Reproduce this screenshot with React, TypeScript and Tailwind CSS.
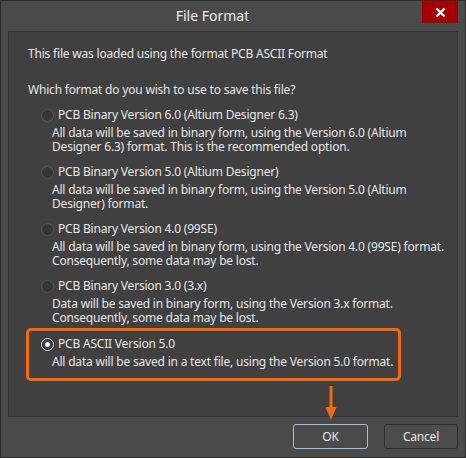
import React from "react";

type Opt = { label: string; desc: string[] };

const options: Opt[] = [
  {
    label: "PCB Binary Version 6.0 (Altium Designer 6.3)",
    desc: [
      "All data will be saved in binary form, using the Version 6.0 (Altium",
      "Designer 6.3) format. This is the recommended option.",
    ],
  },
  {
    label: "PCB Binary Version 5.0 (Altium Designer)",
    desc: [
      "All data will be saved in binary form, using the Version 5.0 (Altium",
      "Designer) format.",
    ],
  },
  {
    label: "PCB Binary Version 4.0 (99SE)",
    desc: [
      "All data will be saved in binary form, using the Version 4.0 (99SE) format.",
      "Consequently, some data may be lost.",
    ],
  },
  {
    label: "PCB Binary Version 3.0 (3.x)",
    desc: [
      "Data will be saved in binary form, using the Version 3.x format.",
      "Consequently, some data may be lost.",
    ],
  },
];

function Radio({ checked }: { checked?: boolean }) {
  if (checked) {
    return (
      <span className="flex h-[13px] w-[13px] shrink-0 items-center justify-center rounded-full border border-[#c9d6e3] bg-[#3a3a3a]">
        <span className="h-[5px] w-[5px] rounded-full bg-[#f2f2f2]" />
      </span>
    );
  }
  return <span className="block h-[13px] w-[13px] shrink-0 rounded-full border border-[#555] bg-[#363636]" />;
}

function Option({ opt, checked }: { opt: Opt; checked?: boolean }) {
  return (
    <div className="whitespace-nowrap">
      <div className="flex h-[14px] items-center">
        <Radio checked={checked} />
        <span className="ml-[4px]">{opt.label}</span>
      </div>
      <div className="mt-[4px] pl-[11px]">
        {opt.desc.map((d) => (
          <div key={d}>{d}</div>
        ))}
      </div>
    </div>
  );
}

export default function App() {
  return (
    <div
      className="relative flex h-[458px] w-[466px] flex-col border border-[#2b2b2b] bg-[#4a4a4a] text-[12px] leading-[14px] tracking-[-0.2px] text-[#e6e6e6]"
      style={{ fontFamily: '"Noto Sans", "Open Sans", sans-serif' }}
    >
      <div className="flex h-[30px] items-start">
        <div className="flex-1 pl-[2px] pt-[6px] text-center text-[14px] leading-[18px] tracking-normal text-[#ececec]">File Format</div>
        <button className="mr-[7px] flex h-[22px] w-[36px] items-center justify-center bg-[#a40000]">
          <svg width="11" height="11" viewBox="0 0 11 11">
            <path d="M1.5 1.5 L9.5 9.5 M9.5 1.5 L1.5 9.5" stroke="#ffffff" strokeWidth="2.4" />
          </svg>
        </button>
      </div>

      <div className="mx-[7px] h-[386px] whitespace-nowrap border border-[#353535] bg-[#404040] pl-[19px] pt-[15px]">
        <div>This file was loaded using the format PCB ASCII Format</div>
        <div className="mt-[22px]">Which format do you wish to use to save this file?</div>
        <div className="mt-[11px] flex flex-col gap-[11px] pl-[13px]">
          {options.map((o) => (
            <Option key={o.label} opt={o} />
          ))}
        </div>
        <div className="-ml-[2px] mt-[3px] w-[375px] rounded-[5px] border-[3px] border-[#f26a10] pb-[9px] pl-[12px] pt-[6px]">
          <Option opt={{ label: "PCB ASCII Version 5.0", desc: ["All data will be saved in a text file, using the Version 5.0 format."] }} checked />
        </div>
      </div>

      <div className="flex flex-1 items-start justify-end gap-[16px] pr-[7px] pt-[7px]">
        <button className="h-[25px] w-[75px] rounded-[3px] border border-[#9cc3e6] bg-[#4a4a4a] text-[12px] text-[#e6e6e6]">OK</button>
        <button className="h-[25px] w-[74px] rounded-[3px] border border-[#2e2e2e] bg-[#4c4c4c] text-[12px] text-[#e6e6e6]">Cancel</button>
      </div>

      <svg className="absolute left-[323px] top-[384px]" width="14" height="36" viewBox="0 0 14 36">
        <path d="M7 1 V24" stroke="#f26a10" strokeWidth="3" />
        <path d="M1.5 22 L12.5 22 L7 35 Z" fill="#f26a10" />
      </svg>
    </div>
  );
}
